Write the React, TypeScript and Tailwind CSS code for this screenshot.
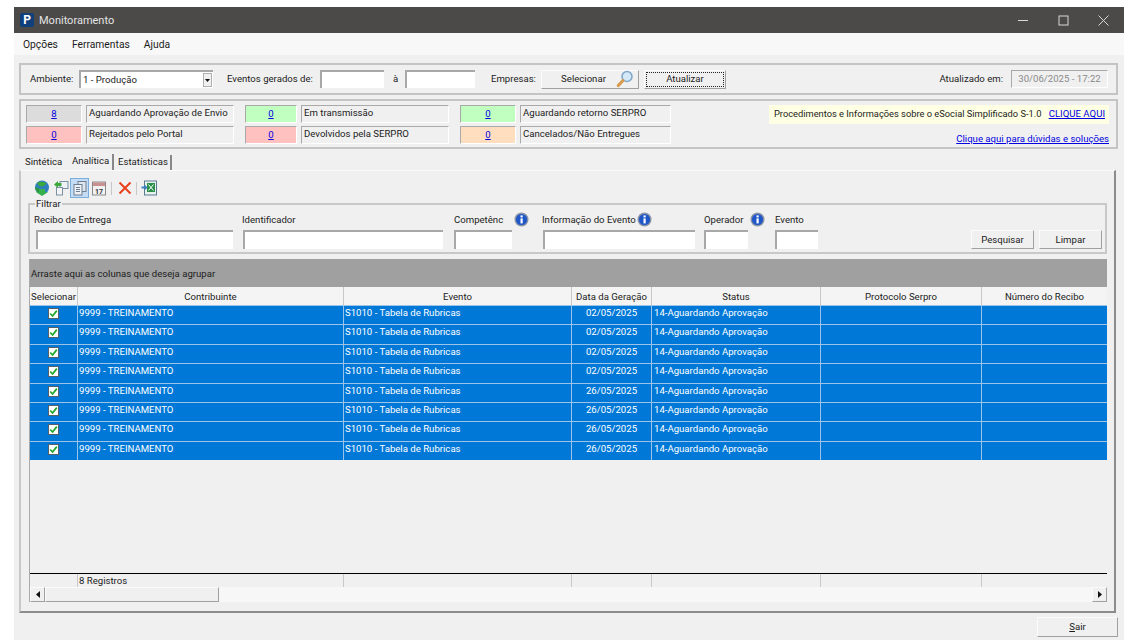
import type { ReactNode } from 'react'

const COLS = [
  { name: 'Selecionar', w: 'w-[48px]' },
  { name: 'Contribuinte', w: 'w-[266px]' },
  { name: 'Evento', w: 'w-[228px]' },
  { name: 'Data da Geração', w: 'w-[80px]' },
  { name: 'Status', w: 'w-[169px]' },
  { name: 'Protocolo Serpro', w: 'w-[161px]' },
  { name: 'Número do Recibo', w: 'flex-1' },
]

const ROWS = ['02/05/2025', '02/05/2025', '02/05/2025', '02/05/2025', '26/05/2025', '26/05/2025', '26/05/2025', '26/05/2025']

const sunken = 'border-t-2 border-l-2 border-t-[#a8a8a8] border-l-[#a8a8a8] bg-white'
const btn = 'flex items-center justify-center bg-[#f0f0f0] border border-[#fbfbfb] border-r-[#a0a0a0] border-b-[#a0a0a0]'

function Stat({ n, label, color, w, lw }: { n: string; label: string; color: string; w: string; lw: string }) {
  return (
    <div className="flex h-[18px] gap-[4px]">
      <div className={`${w} ${color} flex items-center justify-center border-t border-l border-[#a9a9a9] border-r-white border-b-white border-r border-b`}>
        <span className="text-[#0000e0] underline">{n}</span>
      </div>
      <div className={`${lw} flex items-center pl-[2px] pb-[2px] whitespace-nowrap border-t border-l border-[#a9a9a9] border-r-white border-b-white border-r border-b`}>{label}</div>
    </div>
  )
}

function Info() {
  return (
    <svg width="15" height="15" viewBox="0 0 15 15" className="shrink-0">
      <circle cx="7.5" cy="7.5" r="7" fill="#8a94a6" />
      <circle cx="7.5" cy="7.5" r="5.6" fill="#1f57c8" />
      <rect x="6.5" y="6.4" width="2.2" height="5" fill="#fff" />
      <rect x="6.5" y="3.4" width="2.2" height="2" fill="#fff" />
    </svg>
  )
}

function Field({ label, w, lw, iw, ml, info }: { label: string; w: string; lw: string; iw: string; ml?: string; info?: boolean }) {
  return (
    <div className={`${w} flex flex-col shrink-0`}>
      <div className={`${lw} h-[17px] flex items-center justify-between whitespace-nowrap`}>
        <span>{label}</span>
        {info && <Info />}
      </div>
      <div className={`${sunken} ${iw} ${ml ?? ''} h-[19px] mt-[2px]`} />
    </div>
  )
}

function ToolIcon({ children, active }: { children: ReactNode; active?: boolean }) {
  return (
    <div className={`w-[19px] h-[20px] flex items-center justify-center ${active ? 'bg-[#c4dcf4] border border-[#7aaedc]' : ''}`}>
      <svg width="16" height="16" viewBox="0 0 16 16">{children}</svg>
    </div>
  )
}

function Check() {
  return (
    <div className="w-[11px] h-[11px] bg-white border border-[#55606a] flex items-center justify-center">
      <svg width="9" height="9" viewBox="0 0 9 9">
        <path d="M1.2 4.5 L3.6 7 L7.8 1.6" fill="none" stroke="#22a82c" strokeWidth="1.8" />
      </svg>
    </div>
  )
}

export default function App() {
  return (
    <div className="w-[1135px] h-[640px] bg-white overflow-hidden pl-[14px] pr-[11px] pt-[7px] text-[9.6px] leading-none text-[#1c1c1c] font-['Roboto','Liberation_Sans',sans-serif]">
      <div className="h-[633px] bg-[#f0f0f0] flex flex-col">
        {/* barra de titulo */}
        <div className="h-[26px] bg-[#4b4a48] flex items-center pl-[6px] text-[#e4e4e4] shrink-0">
          <div className="w-[14px] h-[14px] rounded-[2px] bg-[#10407c] flex items-center justify-center text-white font-bold text-[12px]">P</div>
          <span className="ml-[5px] text-[11px]">Monitoramento</span>
          <div className="ml-auto flex items-center">
            <svg width="11" height="11" viewBox="0 0 11 11" className="mr-[29px]"><path d="M0 5.5H10" stroke="#d8d8d8" /></svg>
            <svg width="11" height="11" viewBox="0 0 11 11" className="mr-[29px]"><rect x="1" y="1" width="9" height="9" fill="none" stroke="#d8d8d8" /></svg>
            <svg width="11" height="11" viewBox="0 0 11 11" className="mr-[15px]"><path d="M0.5 0.5L10.5 10.5M10.5 0.5L0.5 10.5" stroke="#d8d8d8" /></svg>
          </div>
        </div>

        {/* menu */}
        <div className="h-[22px] bg-[#f8f8f8] flex items-center pl-[9px] pt-[2px] gap-[14px] text-[10.3px] shrink-0">
          <span>Opções</span>
          <span>Ferramentas</span>
          <span>Ajuda</span>
        </div>

        {/* filtros do topo */}
        <div className="mt-[8px] ml-[5px] mr-[6px] h-[32px] border-2 border-[#c4c4c4] flex items-center pl-[9px] shrink-0">
          <span className="w-[49px]">Ambiente:</span>
          <div className={`${sunken} w-[134px] h-[18px] flex items-center pl-[2px]`}>
            1 - Produção
            <div className="ml-auto mr-[1px] w-[9px] h-[14px] bg-[#f0f0f0] border border-[#b0b0b0] flex items-center justify-center">
              <svg width="5" height="3" viewBox="0 0 5 3"><path d="M0 0H5L2.5 3Z" fill="#111" /></svg>
            </div>
          </div>
          <span className="ml-[14px] w-[93px]">Eventos gerados de:</span>
          <div className={`${sunken} w-[64px] h-[18px]`} />
          <span className="ml-[9px] w-[12px]">à</span>
          <div className={`${sunken} w-[70px] h-[18px]`} />
          <span className="ml-[16px] w-[50px]">Empresas:</span>
          <div className={`${btn} w-[98px] h-[19px] pl-[15px]`}>
            Selecionar
            <svg width="18" height="18" viewBox="0 0 18 18" className="ml-[10px]">
              <circle cx="11" cy="6.5" r="5" fill="#d4e8f8" stroke="#7fa6c8" strokeWidth="1.5" />
              <path d="M7 10.5L2.2 15.6" stroke="#d89a4c" strokeWidth="3" strokeLinecap="round" />
            </svg>
          </div>
          <div className={`${btn} ml-[5px] w-[82px] h-[19px] relative`}>
            <div className="absolute inset-[1px] border border-dotted border-[#222]" />
            Atualizar
          </div>
          <span className="ml-auto">Atualizado em:</span>
          <div className="ml-[8px] mr-[8px] w-[97px] h-[18px] flex items-center justify-center text-[#8a8a8a] border-t border-l border-[#a9a9a9] border-r border-b border-r-white border-b-white">30/06/2025 - 17:22</div>
        </div>

        {/* resumo */}
        <div className="mt-[4px] ml-[5px] mr-[6px] h-[50px] border-2 border-[#c4c4c4] flex pl-[5px] pt-[4px] shrink-0">
          <div className="flex flex-col gap-[3px]">
            <Stat n="8" label="Aguardando Aprovação de Envio" color="bg-[#dcdcdc]" w="w-[56px]" lw="w-[148px]" />
            <Stat n="0" label="Rejeitados pelo Portal" color="bg-[#ffc0c0]" w="w-[56px]" lw="w-[148px]" />
          </div>
          <div className="flex flex-col gap-[3px] ml-[11px]">
            <Stat n="0" label="Em transmissão" color="bg-[#c0ffc0]" w="w-[52px]" lw="w-[148px]" />
            <Stat n="0" label="Devolvidos pela SERPRO" color="bg-[#ffc0c0]" w="w-[52px]" lw="w-[148px]" />
          </div>
          <div className="flex flex-col gap-[3px] ml-[11px]">
            <Stat n="0" label="Aguardando retorno SERPRO" color="bg-[#c0ffc0]" w="w-[56px]" lw="w-[151px]" />
            <Stat n="0" label="Cancelados/Não Entregues" color="bg-[#ffdec0]" w="w-[56px]" lw="w-[151px]" />
          </div>
          <div className="ml-auto mr-[7px] flex flex-col items-end">
            <div className="w-[340px] h-[19px] bg-[#ffffe4] flex items-center justify-between pl-[5px] pr-[4px] pb-[2px] whitespace-nowrap">
              <span className="text-[9.3px]">Procedimentos e Informações sobre o eSocial Simplificado S-1.0</span>
              <span className="text-[#0000e0] underline">CLIQUE AQUI</span>
            </div>
            <span className="mt-[10px] text-[#0000e0] underline">Clique aqui para dúvidas e soluções</span>
          </div>
        </div>

        {/* abas */}
        <div className="mt-[5px] ml-[6px] h-[16px] flex items-end shrink-0">
          <div className="w-[47px] h-[15px] pl-[5px] pb-[2px] flex items-center">Sintética</div>
          <div className="w-[47px] h-[16px] pl-[5px] pb-[2px] flex items-center border-r-2 border-[#888]">Analítica</div>
          <div className="w-[58px] h-[15px] pl-[4px] pb-[2px] flex items-center border-r-2 border-[#888]">Estatísticas</div>
        </div>

        {/* pagina da aba */}
        <div className="ml-[5px] mr-[8px] h-[443px] border-l-2 border-t border-r-2 border-b-2 border-l-[#c8c8c8] border-t-[#fbfbfb] border-r-[#8c8c8c] border-b-[#8c8c8c] flex flex-col pl-[7px] pr-[7px] shrink-0">
          <div className="h-[34px] pt-[7px] pl-[4px] flex items-start shrink-0">
            <div className="flex items-center">
              <ToolIcon>
                <circle cx="8" cy="7.5" r="7" fill="#2f7fc0" />
                <path d="M3 3C6 1 10 1.5 12.5 3.5L9 6.5L5 6Z" fill="#3aa83c" />
                <path d="M1.2 7L5 8.5L6 11L3.5 12.5C2 11 1.2 9.2 1.2 7Z" fill="#2c9a3a" />
                <path d="M5 9H11V12H14L8 16L2 12H5Z" fill="#35b04a" />
              </ToolIcon>
              <ToolIcon>
                <rect x="7" y="1.5" width="8" height="7" fill="#eef2f6" stroke="#7d8fa0" />
                <rect x="3.5" y="7.5" width="6" height="7.5" fill="#f2f4f6" stroke="#7d8fa0" />
                <path d="M1 4.5L5 1V3H8.5V6H5V8Z" fill="#3aa83c" />
              </ToolIcon>
              <ToolIcon active>
                <rect x="6" y="1.5" width="8" height="10" fill="#dfe6ee" stroke="#6d7f92" />
                <rect x="2" y="4.5" width="8" height="10.5" fill="#eef2f6" stroke="#6d7f92" />
                <path d="M4 7.5H8M4 9.5H8M4 11.5H8" stroke="#6d7f92" />
              </ToolIcon>
              <ToolIcon>
                <rect x="1.5" y="2" width="13" height="13" fill="#f2f2f2" stroke="#8a8a8a" />
                <rect x="2" y="2.5" width="12" height="3.5" fill="#c89090" />
                <text x="8" y="13.5" textAnchor="middle" fontSize="7" fontWeight="700" fill="#333">17</text>
              </ToolIcon>
              <div className="w-px h-[13px] bg-[#c8c8c8] mx-[3px]" />
              <ToolIcon>
                <path d="M2.5 2.5L13.5 13.5M13.5 2.5L2.5 13.5" stroke="#e8401c" strokeWidth="2" />
              </ToolIcon>
              <div className="w-px h-[13px] bg-[#c8c8c8] mx-[2px]" />
              <ToolIcon>
                <rect x="3.5" y="1" width="12" height="14" fill="#e8f2ec" stroke="#5a7a94" />
                <rect x="6" y="3" width="8" height="9" fill="#2a8f4a" />
                <path d="M7.5 4.5L12.5 10.5M12.5 4.5L7.5 10.5" stroke="#fff" />
                <path d="M0.5 6.5H4V5L6.5 7.5L4 10V8.5H0.5Z" fill="#3b7fc4" />
              </ToolIcon>
            </div>
          </div>

          {/* filtrar */}
          <div className="relative h-[51px] border-2 border-[#c8c8c8] flex pl-[4px] pt-[6px] shrink-0 mt-[-2px]">
            <span className="absolute -top-[6px] left-[5px] bg-[#f0f0f0] px-[1px]">Filtrar</span>
            <Field label="Recibo de Entrega" w="w-[208px]" lw="w-[190px]" iw="w-[197px]" ml="ml-[2px]" />
            <Field label="Identificador" w="w-[212px]" lw="w-[190px]" iw="w-[200px]" ml="ml-[1px]" />
            <Field label="Competênc" w="w-[88px]" lw="w-[75px]" iw="w-[58px]" info />
            <Field label="Informação do Evento" w="w-[162px]" lw="w-[110px]" iw="w-[152px]" ml="ml-[1px]" info />
            <Field label="Operador" w="w-[71px]" lw="w-[61px]" iw="w-[44px]" info />
            <Field label="Evento" w="w-[44px]" lw="w-[44px]" iw="w-[43px]" />
            <div className="ml-auto mr-[3px] mt-[19px] flex gap-[5px]">
              <div className={`${btn} w-[63px] h-[19px]`}>Pesquisar</div>
              <div className={`${btn} w-[63px] h-[19px]`}>Limpar</div>
            </div>
          </div>

          {/* grade */}
          <div className="mt-[5px] ml-[1px] flex-1 mb-[9px] border-l border-[#a9a9a9] flex flex-col">
            <div className="h-[28px] bg-[#a0a0a0] flex items-center pl-[1px] pt-[1px] shrink-0">Arraste aqui as colunas que deseja agrupar</div>
            <div className="h-[18px] flex shrink-0 bg-[#f4f4f4]">
              {COLS.map((c) => (
                <div key={c.name} className={`${c.w} flex items-center justify-center pt-[1px] border-r border-[#c8c8c8] whitespace-nowrap last:border-r-0`}>{c.name}</div>
              ))}
            </div>
            {ROWS.map((d, i) => (
              <div key={i} className="h-[19.4px] flex shrink-0 bg-[#0078d7] text-white border-t border-[#9cc4e8]">
                <div className="w-[48px] flex justify-center pt-[2px] border-r border-[#9cc4e8]"><Check /></div>
                <div className="w-[266px] pl-[1px] pt-[2px] border-r border-[#9cc4e8]">9999 - TREINAMENTO</div>
                <div className="w-[228px] pl-[1px] pt-[2px] border-r border-[#9cc4e8]">S1010 - Tabela de Rubricas</div>
                <div className="w-[80px] text-center pt-[2px] border-r border-[#9cc4e8]">{d}</div>
                <div className="w-[169px] pl-[2px] pt-[2px] border-r border-[#9cc4e8]">14-Aguardando Aprovação</div>
                <div className="w-[161px] border-r border-[#9cc4e8]" />
                <div className="flex-1" />
              </div>
            ))}
            <div className="flex-1" />
            <div className="h-[14px] flex border-t border-black shrink-0">
              <div className="w-[48px] border-r border-[#c8c8c8]" />
              <div className="w-[266px] pl-[1px] flex items-center border-r border-[#c8c8c8]">8 Registros</div>
              <div className="w-[228px] border-r border-[#c8c8c8]" />
              <div className="w-[80px] border-r border-[#c8c8c8]" />
              <div className="w-[169px] border-r border-[#c8c8c8]" />
              <div className="w-[161px] border-r border-[#c8c8c8]" />
            </div>
            <div className="h-[15px] bg-[#f7f7f7] flex shrink-0">
              <div className={`${btn} w-[15px]`}>
                <svg width="4" height="7" viewBox="0 0 4 7"><path d="M4 0V7L0 3.5Z" fill="#111" /></svg>
              </div>
              <div className={`${btn} w-[174px]`} />
              <div className={`${btn} w-[15px] ml-auto`}>
                <svg width="4" height="7" viewBox="0 0 4 7"><path d="M0 0V7L4 3.5Z" fill="#111" /></svg>
              </div>
            </div>
          </div>
        </div>

        {/* rodape */}
        <div className="flex justify-end pr-[6px] mt-[4px]">
          <div className={`${btn} w-[81px] h-[20px]`}><span><span className="underline">S</span>air</span></div>
        </div>
      </div>
    </div>
  )
}
